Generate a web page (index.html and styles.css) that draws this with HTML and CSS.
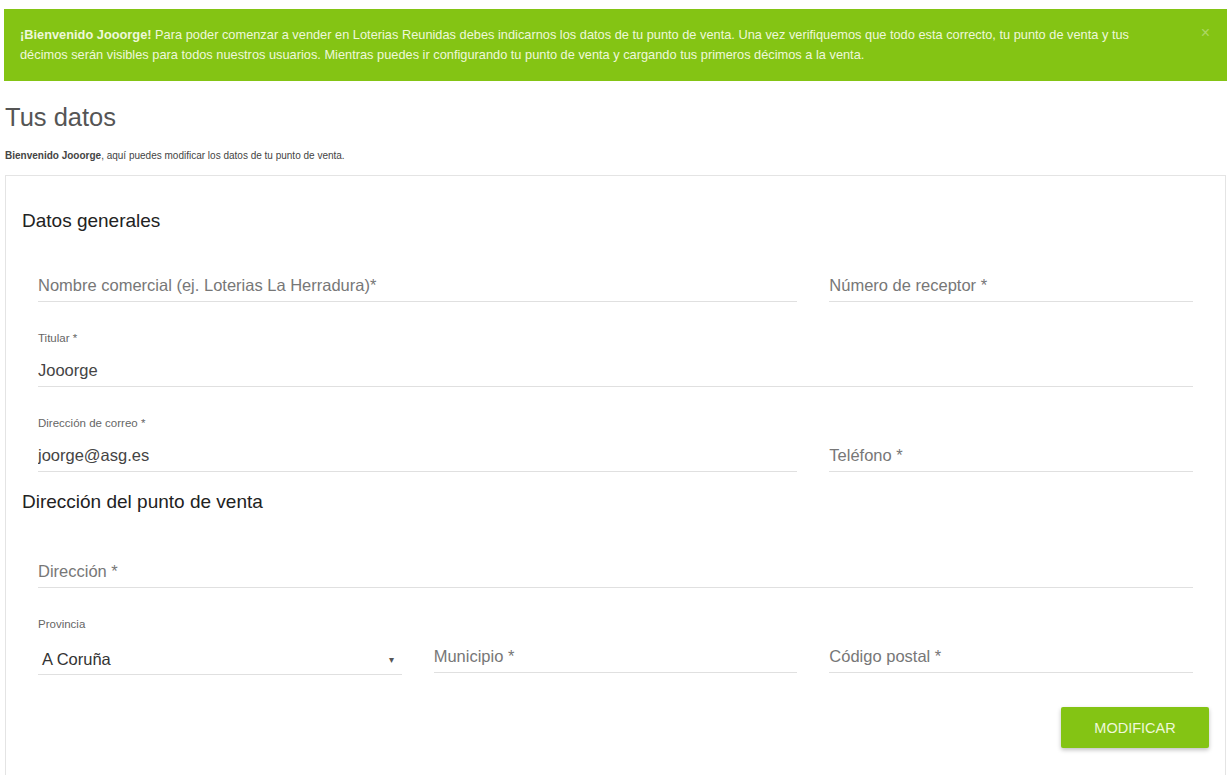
FILE: index.html
```html
<!DOCTYPE html>
<html lang="es">
<head>
    <meta charset="UTF-8">
    <meta name="viewport" content="width=device-width, initial-scale=1.0">
    <title>Tus datos</title>
    <link rel="stylesheet" href="styles.css">
</head>
<body>
<div class="page">
    <div class="alert">
        <p><strong>¡Bienvenido Jooorge!</strong> Para poder comenzar a vender en Loterias Reunidas debes indicarnos los datos de tu punto de venta. Una vez verifiquemos que todo esta correcto, tu punto de venta y tus<br>décimos serán visibles para todos nuestros usuarios. Mientras puedes ir configurando tu punto de venta y cargando tus primeros décimos a la venta.</p>
        <span class="alert-close">&times;</span>
    </div>

    <h1 class="title">Tus datos</h1>
    <p class="subtitle"><strong>Bienvenido Jooorge</strong>, aquí puedes modificar los datos de tu punto de venta.</p>

    <form class="card">
        <h2 class="section-title">Datos generales</h2>
        <div class="fields">
            <div class="field span-2">
                <label></label>
                <input type="text" placeholder="Nombre comercial (ej. Loterias La Herradura)*">
            </div>
            <div class="field">
                <label></label>
                <input type="text" placeholder="Número de receptor *">
            </div>
            <div class="field span-3">
                <label>Titular *</label>
                <input type="text" value="Jooorge">
            </div>
            <div class="field span-2">
                <label>Dirección de correo *</label>
                <input type="text" value="joorge@asg.es">
            </div>
            <div class="field">
                <label></label>
                <input type="text" placeholder="Teléfono *">
            </div>
        </div>

        <h2 class="section-title second">Dirección del punto de venta</h2>
        <div class="fields">
            <div class="field span-3">
                <label></label>
                <input type="text" placeholder="Dirección *">
            </div>
            <div class="field">
                <label>Provincia</label>
                <div class="select">
                    <span>A Coruña</span>
                    <span class="select-arrow">&#9662;</span>
                </div>
            </div>
            <div class="field">
                <label></label>
                <input type="text" placeholder="Municipio *">
            </div>
            <div class="field">
                <label></label>
                <input type="text" placeholder="Código postal *">
            </div>
        </div>

        <div class="actions">
            <button type="button">MODIFICAR</button>
        </div>
    </form>
</div>
</body>
</html>
```

FILE: styles.css
```css
body {
    margin: 0;
    font-family: "Liberation Sans", Arial, sans-serif;
    background-color: #ffffff;
    color: #333;
}
.page {
    padding: 9px 3px 0 4px;
}
.alert {
    position: relative;
    background-color: #84c414;
    color: #eef8da;
    font-size: 12.8px;
    line-height: 20px;
    padding: 16px 60px 16px 16px;
}
.alert p {
    margin: 0;
}
.alert-close {
    position: absolute;
    right: 17px;
    top: 16px;
    font-size: 16px;
    line-height: 16px;
    color: rgba(255, 255, 255, 0.35);
}
.title {
    margin: 22px 0 0 1px;
    font-size: 25.5px;
    line-height: 28px;
    font-weight: normal;
    color: #555;
}
.subtitle {
    margin: 18px 0 0 1px;
    font-size: 10px;
    line-height: 14px;
    color: #444;
}
.card {
    margin: 12px 1px 0 1px;
    border: 1px solid #e4e4e4;
    border-bottom: none;
    padding: 34px 16px 40px;
}
.section-title {
    margin: 0 0 14px;
    font-size: 19px;
    line-height: 22px;
    font-weight: normal;
    color: #222;
}
.section-title.second {
    margin-top: 19px;
    margin-bottom: 19px;
}
.fields {
    display: grid;
    grid-template-columns: repeat(3, 1fr);
    column-gap: 32px;
    row-gap: 29px;
    margin: 0 16px;
}
.span-2 {
    grid-column: span 2;
}
.span-3 {
    grid-column: span 3;
}
.field label {
    display: block;
    height: 14px;
    margin-bottom: 12px;
    font-size: 11.5px;
    line-height: 14px;
    color: #666;
}
.field input {
    display: block;
    box-sizing: border-box;
    width: 100%;
    height: 30px;
    padding: 0 0 2px;
    border: none;
    border-bottom: 1px solid #e0e0e0;
    font-family: inherit;
    font-size: 16.5px;
    color: #444;
    background: transparent;
    outline: none;
}
.field input::placeholder {
    color: #777;
}
.select {
    display: flex;
    justify-content: space-between;
    align-items: center;
    box-sizing: border-box;
    height: 32px;
    padding: 2px 8px 0 4px;
    border-bottom: 1px solid #e0e0e0;
    font-size: 16.5px;
    color: #333;
}
.select-arrow {
    font-size: 10px;
    color: #555;
}
.actions {
    display: flex;
    justify-content: flex-end;
    margin-top: 32px;
}
.actions button {
    width: 148px;
    height: 41px;
    background-color: #84c414;
    color: #eef8da;
    border: none;
    border-radius: 2px;
    font-family: inherit;
    font-size: 14.5px;
    box-shadow: 0 2px 4px rgba(0, 0, 0, 0.25);
    cursor: pointer;
}
.actions button:hover {
    background-color: #76b00f;
}
```
